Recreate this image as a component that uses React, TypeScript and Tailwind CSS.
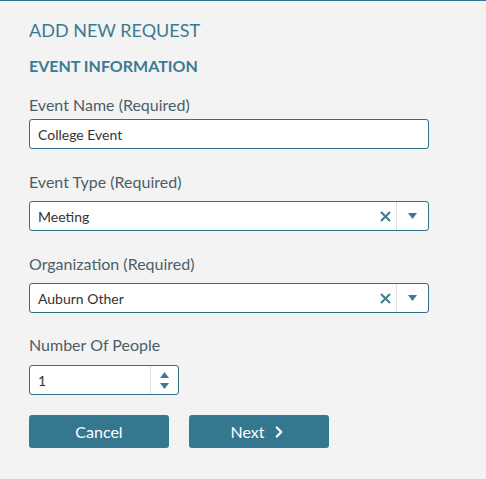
import { ChevronRight } from 'lucide-react';

function Label({ children, className = '' }: { children: React.ReactNode; className?: string }) {
  return <div className={`text-[16px] leading-5 text-[#4b5e68] ${className}`}>{children}</div>;
}

function SelectBox({ value }: { value: string }) {
  return (
    <div className="flex h-[30px] w-[400px] items-center rounded-[3px] border border-[#2f7189] bg-white">
      <span className="flex-1 pl-2 text-[14px] text-[#333]">{value}</span>
      <span className="flex w-[22px] items-center justify-center">
        <svg width="11" height="11" viewBox="0 0 11 11">
          <path d="M1 1L10 10M10 1L1 10" stroke="#3a7d93" strokeWidth="2" />
        </svg>
      </span>
      <span className="h-full w-px bg-[#e0e0e0]" />
      <span className="flex w-[31px] items-center justify-center">
        <svg width="9" height="6" viewBox="0 0 9 6">
          <path d="M0 0H9L4.5 6Z" fill="#3a7d93" />
        </svg>
      </span>
    </div>
  );
}

export default function App() {
  return (
    <div
      className="h-[479px] w-[486px] border-t border-[#2d7590] bg-[#f3f3f3] pl-[29px]"
      style={{ fontFamily: 'Lato, "Open Sans", sans-serif' }}
    >
      <div className="pt-[17px] text-[18px] leading-6 text-[#3b7b91]">ADD NEW REQUEST</div>
      <div className="mt-[14px] text-[16px] font-bold leading-5 text-[#3b7b91]">EVENT INFORMATION</div>

      <Label className="mt-[19px]">Event Name (Required)</Label>
      <div className="mt-[4px] flex h-[30px] w-[400px] items-center rounded-[3px] border border-[#2f7189] bg-white pl-2 text-[14px] text-[#333]">
        College Event
      </div>

      <Label className="mt-[23px]">Event Type (Required)</Label>
      <div className="mt-[9px]">
        <SelectBox value="Meeting" />
      </div>

      <Label className="mt-[23px]">Organization (Required)</Label>
      <div className="mt-[9px]">
        <SelectBox value="Auburn Other" />
      </div>

      <Label className="mt-[22px]">Number Of People</Label>
      <div className="mt-[10px] flex h-[30px] w-[150px] items-center rounded-[3px] border border-[#2f7189] bg-white">
        <span className="flex-1 pl-2 text-[14px] text-[#333]">1</span>
        <span className="h-full w-px bg-[#e0e0e0]" />
        <span className="flex w-[27px] flex-col items-center justify-center gap-[5px]">
          <svg width="9" height="6" viewBox="0 0 9 6">
            <path d="M0 6H9L4.5 0Z" fill="#3a7d93" />
          </svg>
          <svg width="9" height="6" viewBox="0 0 9 6">
            <path d="M0 0H9L4.5 6Z" fill="#3a7d93" />
          </svg>
        </span>
      </div>

      <div className="mt-[20px] flex gap-5">
        <button className="h-[33px] w-[140px] rounded-[3px] bg-[#35778e] text-[16px] text-white">Cancel</button>
        <button className="flex h-[33px] w-[140px] items-center justify-center gap-[5px] rounded-[3px] bg-[#35778e] text-[16px] text-white">
          Next
          <ChevronRight size={18} strokeWidth={3} />
        </button>
      </div>
    </div>
  );
}
